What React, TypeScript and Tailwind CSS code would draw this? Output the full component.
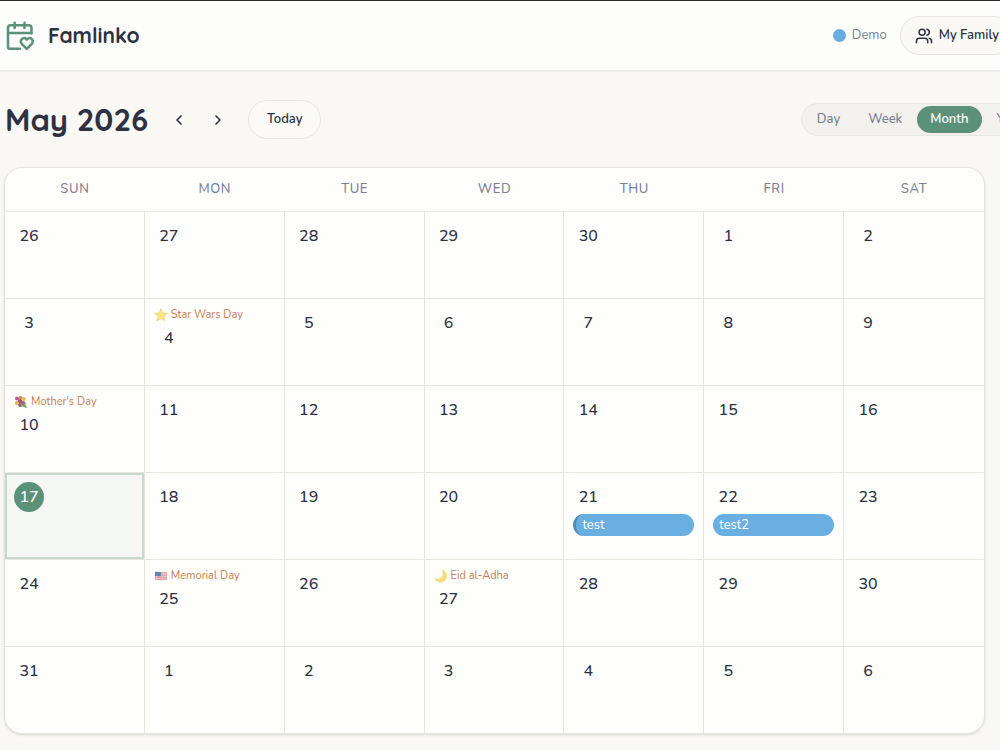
import clsx from 'clsx';
import { ChevronLeft, ChevronRight } from 'lucide-react';

type HolidayIcon = 'star' | 'bouquet' | 'flag' | 'moon';

type CalendarDay = {
  date: number;
  isToday?: boolean;
  holiday?: { icon: HolidayIcon; name: string };
  event?: { title: string; hasMarker?: boolean };
};

const WEEKDAYS = ['Sun', 'Mon', 'Tue', 'Wed', 'Thu', 'Fri', 'Sat'];

const VIEWS = ['Day', 'Week', 'Month', 'Year'];

const WEEKS: CalendarDay[][] = [
  [{ date: 26 }, { date: 27 }, { date: 28 }, { date: 29 }, { date: 30 }, { date: 1 }, { date: 2 }],
  [
    { date: 3 },
    { date: 4, holiday: { icon: 'star', name: 'Star Wars Day' } },
    { date: 5 },
    { date: 6 },
    { date: 7 },
    { date: 8 },
    { date: 9 }
  ],
  [
    { date: 10, holiday: { icon: 'bouquet', name: "Mother's Day" } },
    { date: 11 },
    { date: 12 },
    { date: 13 },
    { date: 14 },
    { date: 15 },
    { date: 16 }
  ],
  [
    { date: 17, isToday: true },
    { date: 18 },
    { date: 19 },
    { date: 20 },
    { date: 21, event: { title: 'test', hasMarker: true } },
    { date: 22, event: { title: 'test2' } },
    { date: 23 }
  ],
  [
    { date: 24 },
    { date: 25, holiday: { icon: 'flag', name: 'Memorial Day' } },
    { date: 26 },
    { date: 27, holiday: { icon: 'moon', name: 'Eid al-Adha' } },
    { date: 28 },
    { date: 29 },
    { date: 30 }
  ],
  [{ date: 31 }, { date: 1 }, { date: 2 }, { date: 3 }, { date: 4 }, { date: 5 }, { date: 6 }]
];

const Logo = () => (
  <svg
    className="size-8 shrink-0 text-[#5a9178]"
    viewBox="0 0 24 24"
    fill="none"
    stroke="currentColor"
    strokeWidth="1.9"
    strokeLinecap="round"
    strokeLinejoin="round"
    aria-hidden="true"
  >
    <path d="M20.6 10V6a2 2 0 0 0-2-2H5a2 2 0 0 0-2 2v14a1.6 1.6 0 0 0 1.6 1.6H12" />
    <path d="M15.4 2v4M8 2v4M3 9.8h17.6" />
    <path d="M20.89 14.3a2.43 2.43 0 0 0-2.65-.52c-.3.12-.57.3-.8.53l-.34.34-.35-.34a2.43 2.43 0 0 0-2.65-.53c-.3.12-.56.3-.79.53-.95.94-1 2.53.2 3.74l3.59 3.55 3.6-3.55c1.2-1.21 1.14-2.8.19-3.74Z" />
  </svg>
);

const FamilyIcon = () => (
  <svg
    className="size-[18px] shrink-0"
    viewBox="0 0 24 24"
    fill="none"
    stroke="currentColor"
    strokeWidth="2"
    strokeLinecap="round"
    strokeLinejoin="round"
    aria-hidden="true"
  >
    <path d="M17 21v-2a4 4 0 0 0-4-4H6a4 4 0 0 0-4 4v2" />
    <circle cx="9.5" cy="7" r="4" />
    <path d="M22 21v-2a4 4 0 0 0-3-3.87" />
    <path d="M16 3.13a4 4 0 0 1 0 7.75" />
  </svg>
);

const HolidayGlyph = ({ icon }: { icon: HolidayIcon }) => (
  <svg className="size-[14px] shrink-0" viewBox="0 0 14 14" aria-hidden="true">
    {icon === 'star' && (
      <path
        d="M7 .8 8.900 4.900l4.500.5-3.400 3 1 4.400L7 10.500l-4 2.300 1-4.400L.6 5.400l4.500-.5Z"
        fill="#fbe389"
        stroke="#ecc95c"
        strokeWidth="0.6"
        strokeLinejoin="round"
      />
    )}
    {icon === 'bouquet' && (
      <>
        <path d="M6 7 9.500 5l3 3.500-1 1.500 1 2.500-4-.5L5 12Z" fill="#93bd76" />
        <path d="m8 9 4.500 3.500" stroke="#5f9b55" strokeWidth="1.200" />
        <circle cx="3" cy="3.500" r="2" fill="#b8618d" />
        <circle cx="6.500" cy="2.800" r="1.800" fill="#c98a57" />
        <circle cx="9.800" cy="4" r="2" fill="#e6bd58" />
        <circle cx="6" cy="6.200" r="2.200" fill="#a34f80" />
        <circle cx="2.800" cy="8" r="2" fill="#dfb655" />
        <circle cx="9" cy="8" r="1.800" fill="#b25c87" />
        <circle cx="5.800" cy="10" r="1.700" fill="#8d5a83" />
      </>
    )}
    {icon === 'flag' && (
      <>
        <path d="M1 3c2-1 4 .5 6 0s4-.5 6 0v8c-2-.6-4-.2-6 .2S3 10.500 1 11Z" fill="#f0cfd1" />
        <path
          d="M1 4.200c2-.8 4 .4 6 0s4-.5 6 0M1 6.400c2-.8 4 .4 6 0s4-.5 6 0M1 8.500c2-.8 4 .4 6 0s4-.5 6 0M1 10.500c2-.8 4 .4 6 0s4-.5 6 0"
          stroke="#e08d93"
          strokeWidth="1"
          fill="none"
        />
        <path d="M1 3c2-1 4 .5 6 0v4.300c-2 .5-4-.6-6 0Z" fill="#6484b3" />
      </>
    )}
    {icon === 'moon' && (
      <path
        d="M8.200 1A6.200 6.200 0 1 1 1 9.600c3.200 1.200 6.200.4 7.500-2.100 1.100-2.200.9-4.500-.3-6.500Z"
        fill="#f8dc78"
        stroke="#efcd62"
        strokeWidth="0.4"
      />
    )}
  </svg>
);

const Header = () => (
  <header className="flex h-[71px] items-center justify-between border-b-2 border-[#efeeea] bg-[#fdfdfb] pl-1">
    <div className="flex items-center gap-3">
      <Logo />
      <span className="font-['Quicksand','Lato',sans-serif] text-[21px] font-bold">Famlinko</span>
    </div>
    <div className="-mr-3.5 flex shrink-0 items-center gap-[13px]">
      <div className="flex items-center gap-1.5 text-[13px] text-[#7a7f92]">
        <span className="size-[13px] rounded-full bg-[#67aee0]" />
        Demo
      </div>
      <button
        type="button"
        className="flex h-[39px] items-center gap-1.5 whitespace-nowrap rounded-full border border-[#e8e6e0] bg-[#faf9f6] px-3.5 text-[13px] font-semibold"
      >
        <FamilyIcon />
        My Family
      </button>
    </div>
  </header>
);

const Toolbar = () => (
  <div className="flex items-center justify-between pl-[5px]">
    <div className="flex items-center">
      <h1 className="mr-[11px] whitespace-nowrap font-['Quicksand','Lato',sans-serif] text-[31px] leading-9 font-bold">
        May 2026
      </h1>
      <button type="button" aria-label="Previous month" className="grid size-[39px] place-items-center">
        <ChevronLeft className="size-4" strokeWidth={2.5} />
      </button>
      <button type="button" aria-label="Next month" className="grid size-[39px] place-items-center">
        <ChevronRight className="size-4" strokeWidth={2.5} />
      </button>
      <button
        type="button"
        className="ml-[11px] h-[39px] w-[73px] rounded-full border border-[#e8e6e0] bg-[#fbfaf7] text-[13px] font-semibold"
      >
        Today
      </button>
    </div>
    <div className="-mr-[38px] flex h-[33px] shrink-0 items-center gap-0.5 rounded-full border border-[#e8e6e0] bg-[#f2f1ed] px-0.5 text-[13px] font-medium text-[#7a7f92]">
      {VIEWS.map((view) => (
        <button
          key={view}
          type="button"
          className={clsx(
            'h-[27px] rounded-full px-[13px]',
            view === 'Month' && 'bg-[#5a9178] font-semibold text-white'
          )}
        >
          {view}
        </button>
      ))}
    </div>
  </div>
);

const DayCell = ({ date, isToday, holiday, event }: CalendarDay) => (
  <td
    className={clsx(
      'h-[87px] border-r border-b border-[#e9e6e0] px-[9px] align-top last:border-r-0',
      holiday ? 'pt-2' : 'pt-[9px]',
      isToday && 'bg-[#f4f7f4] inset-ring-2 inset-ring-[#c6dad0]'
    )}
  >
    {holiday && (
      <div className="flex h-4 items-center gap-[3px] whitespace-nowrap text-[11px] leading-4 text-[#c67d52]">
        <HolidayGlyph icon={holiday.icon} />
        {holiday.name}
      </div>
    )}
    <div
      className={clsx(
        'grid size-[30px] place-items-center rounded-full text-base leading-5 font-medium',
        isToday && 'bg-[#5a9178] text-white'
      )}
    >
      {date}
    </div>
    {event && (
      <button
        type="button"
        className={clsx(
          'mt-0.5 block h-[22px] w-full truncate rounded-full bg-[#69afe1] px-1.5 text-left text-[13px] leading-5 text-white',
          event.hasMarker && 'border-l-3 border-[#548cb4]'
        )}
      >
        {event.title}
      </button>
    )}
  </td>
);

const MonthGrid = () => (
  <div className="mr-[15px] ml-1 overflow-hidden rounded-[18px] border border-[#e6e4de] bg-[#fefefc] shadow-sm">
    <table className="w-full table-fixed border-separate border-spacing-0">
      <thead>
        <tr>
          {WEEKDAYS.map((weekday) => (
            <th
              key={weekday}
              scope="col"
              className="h-11 border-b border-[#e9e6e0] text-[13px] font-medium tracking-wider text-[#7a7f92] uppercase"
            >
              {weekday}
            </th>
          ))}
        </tr>
      </thead>
      <tbody className="[&>tr:last-child>td]:h-[86px] [&>tr:last-child>td]:border-b-0">
        {WEEKS.map((week, index) => (
          <tr key={index}>
            {week.map((day) => (
              <DayCell key={day.date} {...day} />
            ))}
          </tr>
        ))}
      </tbody>
    </table>
  </div>
);

export default function App() {
  return (
    <div className="min-h-screen overflow-hidden border-t border-[#2b2b2e] bg-[#f9f8f4] font-['Nunito','Noto_Sans',sans-serif] text-[#2d3142]">
      <Header />
      <main className="flex flex-col gap-7 pt-7 pb-4">
        <Toolbar />
        <MonthGrid />
      </main>
    </div>
  );
}
